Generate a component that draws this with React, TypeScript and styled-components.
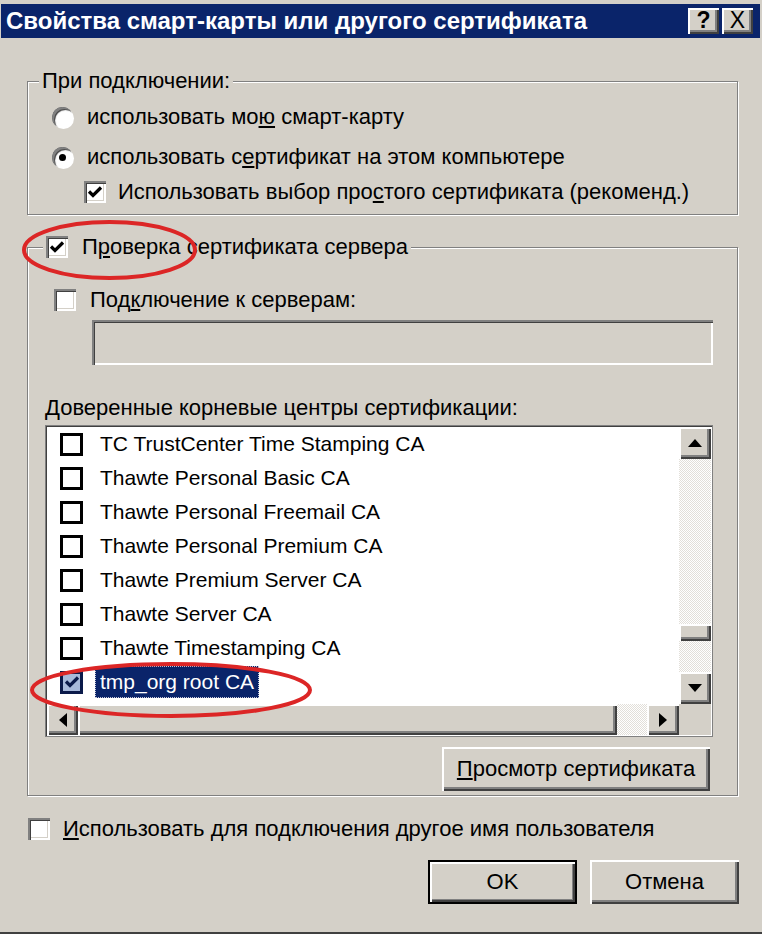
import React from "react";
import styled, { createGlobalStyle, css } from "styled-components";

const GlobalStyle = createGlobalStyle`
  html, body {
    margin: 0;
    background: #d4d0c8;
  }
  body {
    font-family: "Liberation Sans", Arial, sans-serif;
    color: #000;
  }
`;

const raised = css`
  background: #d4d0c8;
  box-shadow: inset 2px 2px 0 #fff, inset -2px -2px 0 #404040, inset -4px -4px 0 #808080;
`;

const sunken = css`
  box-shadow: inset 2px 2px 0 #808080, inset 3px 3px 0 #404040, inset -2px -2px 0 #fff,
    inset -3px -3px 0 #d4d0c8;
`;

const Window = styled.div`
  position: relative;
  width: 762px;
  height: 934px;
  box-sizing: border-box;
  padding: 4px 2px 0 1px;
  background: #d4d0c8;
  border-bottom: 2px solid #404040;
  display: flex;
  flex-direction: column;
  overflow: hidden;
`;

const TitleBar = styled.div`
  height: 34px;
  display: flex;
  align-items: center;
  justify-content: space-between;
  padding: 0 7px 0 5px;
  background: #0a246a;
`;

const Title = styled.div`
  color: #fff;
  font-size: 24px;
  font-weight: bold;
  white-space: nowrap;
`;

const CaptionButtons = styled.div`
  display: flex;
  gap: 3px;
`;

const CaptionButton = styled.div`
  ${raised};
  width: 31px;
  height: 26px;
  display: flex;
  align-items: center;
  justify-content: center;
  font-size: 23px;
  font-weight: ${(p: { $bold?: boolean }) => (p.$bold ? "bold" : "normal")};
  line-height: 1;
  padding-bottom: 1px;
  box-sizing: border-box;
`;

const Body = styled.div`
  padding: 31px 22px 0 26px;
  display: flex;
  flex-direction: column;
  font-size: 22px;
`;

const Group = styled.fieldset<{ $gap?: number }>`
  margin: ${(p) => p.$gap ?? 0}px 0 0 0;
  padding: 0;
  min-width: 0;
  border: 1px solid #808080;
  box-shadow: inset 1px 1px 0 #fff, 1px 1px 0 #fff;
`;

const Legend = styled.legend<{ $offset: number }>`
  margin-left: ${(p) => p.$offset}px;
  padding: 0 3px;
  height: 24px;
  line-height: 24px;
  background: #d4d0c8;
  display: flex;
  align-items: center;
  gap: 14px;
`;

const GroupContent = styled.div<{ $pad: string }>`
  padding: ${(p) => p.$pad};
  display: flex;
  flex-direction: column;
`;

const OptionRow = styled.div<{ $h: number; $indent: number; $gap: number; $top?: number }>`
  height: ${(p) => p.$h}px;
  margin-top: ${(p) => p.$top ?? 0}px;
  padding-left: ${(p) => p.$indent}px;
  display: flex;
  align-items: center;
  gap: ${(p) => p.$gap}px;
  white-space: nowrap;
`;

const Radio = styled.span<{ $checked?: boolean }>`
  width: 21px;
  height: 21px;
  border-radius: 50%;
  background: #fff;
  box-shadow: inset 2px 2px 0 #808080, inset 3px 3px 1px #404040, 1px 1px 0 #fff;
  display: flex;
  align-items: center;
  justify-content: center;
  flex: none;
  &::after {
    content: "";
    width: 7px;
    height: 7px;
    border-radius: 50%;
    background: ${(p) => (p.$checked ? "#000" : "transparent")};
  }
`;

const Box = styled.span`
  width: 22px;
  height: 22px;
  background: #fff;
  ${sunken};
  display: flex;
  align-items: center;
  justify-content: center;
  flex: none;
`;

const Key = styled.span`
  text-decoration: underline;
  text-underline-offset: 2px;
`;

const TextField = styled.div`
  height: 45px;
  margin: 5px 24px 0 64px;
  background: #d4d0c8;
  ${sunken};
`;

const FieldLabel = styled.div`
  height: 24px;
  line-height: 24px;
  margin: 31px 0 0 17px;
  white-space: nowrap;
`;

const ListBox = styled.div`
  width: 668px;
  height: 312px;
  margin: 5px 0 0 17px;
  box-sizing: border-box;
  padding: 2px;
  background: #fff;
  border: 0;
  box-shadow: inset 2px 2px 0 #404040, inset -2px -2px 0 #fff;
  outline: 1px solid #808080;
  outline-offset: -1px;
  display: grid;
  grid-template-columns: 1fr 32px;
  grid-template-rows: 1fr 31px;
`;

const Items = styled.div`
  overflow: hidden;
  font-size: 21px;
`;

const Item = styled.div`
  height: 34px;
  padding-left: 13px;
  display: flex;
  align-items: center;
`;

const ItemBox = styled.span<{ $checked?: boolean }>`
  width: 23px;
  height: 23px;
  box-sizing: border-box;
  border: 3px solid ${(p) => (p.$checked ? "#0b1a4a" : "#000")};
  background: ${(p) => (p.$checked ? "#a7b9da" : "#fff")};
  display: flex;
  align-items: center;
  justify-content: center;
  flex: none;
`;

const ItemText = styled.span<{ $selected?: boolean }>`
  margin-left: 12px;
  padding: 0 5px;
  height: 32px;
  line-height: 32px;
  white-space: nowrap;
  color: ${(p) => (p.$selected ? "#fff" : "#000")};
  background: ${(p) => (p.$selected ? "#0a246a" : "transparent")};
  ${(p) =>
    p.$selected &&
    css`
      outline: 1px dotted #c8c8d8;
      outline-offset: -1px;
    `}
`;

const VScroll = styled.div`
  display: grid;
  grid-template-rows: 32px 1fr 32px;
  background: #efeeea;
`;

const HScroll = styled.div`
  display: grid;
  grid-template-columns: 31px 1fr 32px;
  background: #efeeea;
`;

const Track = styled.div<{ $vertical?: boolean }>`
  display: flex;
  flex-direction: ${(p) => (p.$vertical ? "column" : "row")};
  background: repeating-conic-gradient(#fff 0 25%, #e2dfd9 0 50%) 0 0 / 2px 2px;
`;

const Thumb = styled.div<{ $before: number; $size: number; $vertical?: boolean }>`
  ${raised};
  flex: none;
  ${(p) =>
    p.$vertical
      ? css`
          margin-top: ${p.$before}px;
          height: ${p.$size}px;
        `
      : css`
          margin-left: ${p.$before}px;
          width: ${p.$size}px;
        `}
`;

const ScrollButton = styled.div`
  ${raised};
  display: flex;
  align-items: center;
  justify-content: center;
`;

const Corner = styled.div`
  background: #d4d0c8;
`;

const Button = styled.div<{ $default?: boolean; $w: number }>`
  ${raised};
  width: ${(p) => p.$w}px;
  height: 44px;
  box-sizing: border-box;
  display: flex;
  align-items: center;
  justify-content: center;
  font-size: 22px;
  white-space: nowrap;
  ${(p) =>
    p.$default &&
    css`
      border: 2px solid #000;
      box-shadow: inset 2px 2px 0 #fff, inset -2px -2px 0 #404040, inset -3px -3px 0 #808080;
    `}
`;

const ViewRow = styled.div`
  display: flex;
  justify-content: flex-end;
  margin: 10px 27px 0 0;
`;

const Footer = styled.div`
  display: flex;
  justify-content: flex-end;
  gap: 13px;
  margin: 16px -1px 0 0;
`;

const Annotation = styled.svg<{ $x: number; $y: number }>`
  position: absolute;
  left: ${(p) => p.$x}px;
  top: ${(p) => p.$y}px;
  overflow: visible;
  pointer-events: none;
`;

const Check = ({ color = "#000" }: { color?: string }) => (
  <svg width="16" height="14" viewBox="0 0 16 14">
    <path d="M2 6.5 L6 10.5 L14 2.5" fill="none" stroke={color} strokeWidth="3.2" />
  </svg>
);

const Arrow = ({ dir }: { dir: "up" | "down" | "left" | "right" }) => {
  const pts = {
    up: "0,8 7,0 14,8",
    down: "0,0 14,0 7,8",
    left: "8,0 8,14 0,7",
    right: "0,0 0,14 8,7",
  }[dir];
  const v = dir === "up" || dir === "down";
  return (
    <svg width={v ? 14 : 8} height={v ? 8 : 14}>
      <polygon points={pts} fill="#000" />
    </svg>
  );
};

const items = [
  "TC TrustCenter Time Stamping CA",
  "Thawte Personal Basic CA",
  "Thawte Personal Freemail CA",
  "Thawte Personal Premium CA",
  "Thawte Premium Server CA",
  "Thawte Server CA",
  "Thawte Timestamping CA",
  "tmp_org root CA",
];

export default function App() {
  return (
    <Window>
      <GlobalStyle />
      <TitleBar>
        <Title>Свойства смарт-карты или другого сертификата</Title>
        <CaptionButtons>
          <CaptionButton $bold>?</CaptionButton>
          <CaptionButton>X</CaptionButton>
        </CaptionButtons>
      </TitleBar>

      <Body>
        <Group>
          <Legend $offset={11}>При подключении:</Legend>
          <GroupContent $pad="4px 0 7px 0">
            <OptionRow $h={40} $indent={24} $gap={14}>
              <Radio />
              <span>
                использовать мо<Key>ю</Key> смарт-карту
              </span>
            </OptionRow>
            <OptionRow $h={40} $indent={24} $gap={14}>
              <Radio $checked />
              <span>
                использовать с<Key>е</Key>ртификат на этом компьютере
              </span>
            </OptionRow>
            <OptionRow $h={30} $indent={56} $gap={12}>
              <Box>
                <Check />
              </Box>
              <span>
                Использовать выбор про<Key>с</Key>того сертификата (рекоменд.)
              </span>
            </OptionRow>
          </GroupContent>
        </Group>

        <Group $gap={20}>
          <Legend $offset={15}>
            <Box>
              <Check />
            </Box>
            <span>
              П<Key>р</Key>оверка сертификата сервера
            </span>
          </Legend>
          <GroupContent $pad="0 0 4px 0">
            <OptionRow $h={30} $top={26} $indent={26} $gap={14}>
              <Box />
              <span>
                Под<Key>к</Key>лючение к серверам:
              </span>
            </OptionRow>
            <TextField />
            <FieldLabel>
              <Key>Д</Key>оверенные корневые центры сертификации:
            </FieldLabel>
            <ListBox>
              <Items>
                {items.map((name, i) => {
                  const selected = i === items.length - 1;
                  return (
                    <Item key={name}>
                      <ItemBox $checked={selected}>{selected && <Check color="#0b1a4a" />}</ItemBox>
                      <ItemText $selected={selected}>{name}</ItemText>
                    </Item>
                  );
                })}
              </Items>
              <VScroll>
                <ScrollButton>
                  <Arrow dir="up" />
                </ScrollButton>
                <Track $vertical>
                  <Thumb $vertical $before={165} $size={17} />
                </Track>
                <ScrollButton>
                  <Arrow dir="down" />
                </ScrollButton>
              </VScroll>
              <HScroll>
                <ScrollButton>
                  <Arrow dir="left" />
                </ScrollButton>
                <Track>
                  <Thumb $before={0} $size={539} />
                </Track>
                <ScrollButton>
                  <Arrow dir="right" />
                </ScrollButton>
              </HScroll>
              <Corner />
            </ListBox>
            <ViewRow>
              <Button $w={268}>
                <Key>П</Key>росмотр сертификата
              </Button>
            </ViewRow>
          </GroupContent>
        </Group>

        <OptionRow $h={30} $top={18} $indent={1} $gap={13}>
          <Box />
          <span>
            <Key>И</Key>спользовать для подключения другое имя пользователя
          </span>
        </OptionRow>

        <Footer>
          <Button $default $w={149}>
            OK
          </Button>
          <Button $w={149}>Отмена</Button>
        </Footer>
      </Body>

      <Annotation $x={22} $y={220} width="175" height="60">
        <ellipse cx="87.5" cy="30" rx="85.5" ry="28" fill="none" stroke="#dc2626" strokeWidth="4" />
      </Annotation>
      <Annotation $x={30} $y={662} width="282" height="56">
        <ellipse cx="141" cy="28" rx="139" ry="26" fill="none" stroke="#dc2626" strokeWidth="4" />
      </Annotation>
    </Window>
  );
}
